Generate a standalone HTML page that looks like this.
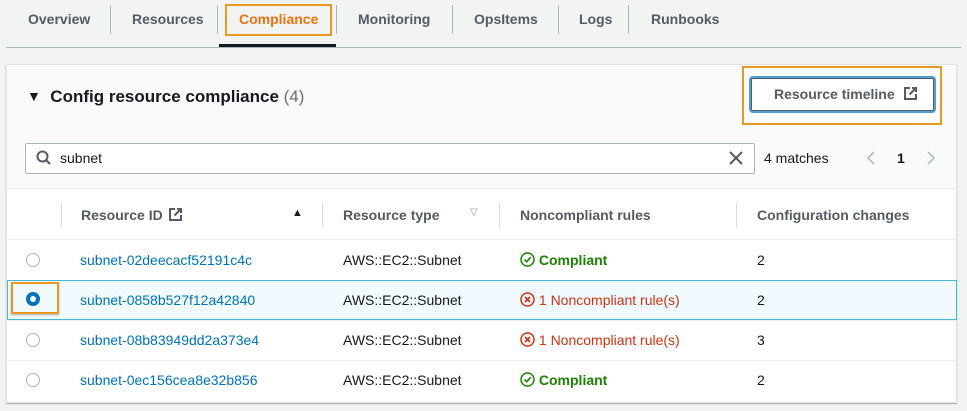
<!DOCTYPE html>
<html><head><style>
body{margin:0;width:967px;height:411px;background:#f2f3f3;font-family:"Liberation Sans",sans-serif;position:relative;overflow:hidden;color:#16191f}
.a{position:absolute}
.tab{position:absolute;top:11px;font-size:14px;font-weight:bold;color:#545b64}
.sep{position:absolute;top:5px;width:1px;height:29px;background:#aab7b8}
.hd{position:absolute;top:207px;font-size:14px;font-weight:bold;color:#545b64}
.hs{position:absolute;top:203px;width:1px;height:24px;background:#d5dbdb}
.link{position:absolute;left:80px;font-size:14px;color:#0073bb}
.typ{position:absolute;left:343px;font-size:14px}
.num{position:absolute;left:757px;font-size:14px}
.radio{position:absolute;left:26px;width:12px;height:12px;border:1px solid #aab7b8;border-radius:50%;background:#fff}
.ok{position:absolute;left:520px;font-size:14px;color:#1d8102;font-weight:bold}
.bad{position:absolute;left:520px;font-size:14px;color:#d13212}
</style></head><body>
<span class="tab" style="left:28px">Overview</span>
<div class="sep" style="left:110px"></div>
<span class="tab" style="left:132px">Resources</span>
<div class="sep" style="left:217px"></div>
<span class="tab" style="left:239px;color:#ec7211">Compliance</span>
<div class="a" style="left:225px;top:4px;width:103px;height:28px;border:2px solid #e8991f"></div>
<div class="sep" style="left:336px"></div>
<span class="tab" style="left:358px">Monitoring</span>
<div class="sep" style="left:452px"></div>
<span class="tab" style="left:474px">OpsItems</span>
<div class="sep" style="left:558px"></div>
<span class="tab" style="left:579px">Logs</span>
<div class="sep" style="left:628px"></div>
<span class="tab" style="left:651px">Runbooks</span>
<div class="a" style="left:6px;top:47px;width:955px;height:1px;background:#aab7b8"></div>
<div class="a" style="left:219px;top:44px;width:117px;height:3px;background:#16191f"></div>

<div class="a" style="left:6px;top:64px;width:949px;height:337px;background:#fafafa;border:1px solid #e1e4e4;box-shadow:0 1px 1px rgba(0,0,0,.3)"></div>
<div class="a" style="left:27px;top:87px;font-size:17px;font-weight:bold"><span style="font-size:14px;position:relative;top:-1px">&#9660;</span>&nbsp; Config resource compliance <span style="color:#687078;font-weight:normal">(4)</span></div>
<div class="a" style="left:742px;top:66px;width:200px;height:59px;border:2px solid #e8991f;box-sizing:border-box"></div>
<div class="a" style="left:751px;top:78px;width:183px;height:33px;border:1px solid #545b64;box-shadow:0 0 0 2px #4f9fd0;border-radius:2px;background:#fff;box-sizing:border-box;font-size:14px;font-weight:bold;color:#545b64;line-height:31px;padding-left:22px">Resource timeline <svg width="13" height="13" style="vertical-align:-1px;margin-left:5px"><path d="M6 1H1V12H12V7M8 1H12V5M12 1L5.5 7.5" fill="none" stroke="#545b64" stroke-width="2"/></svg></div>

<div class="a" style="left:25px;top:143px;width:728px;height:29px;border:1px solid #aab7b8;background:#fff;border-radius:2px"></div>
<svg class="a" style="left:36px;top:150px" width="16" height="16"><circle cx="6.5" cy="6.5" r="5" fill="none" stroke="#545b64" stroke-width="2"/><line x1="10" y1="10" x2="14" y2="14" stroke="#545b64" stroke-width="2"/></svg>
<span class="a" style="left:60px;top:150px;font-size:14px">subnet</span>
<svg class="a" style="left:729px;top:151px" width="14" height="14"><path d="M1 1L13 13M13 1L1 13" stroke="#545b64" stroke-width="2"/></svg>
<span class="a" style="left:764px;top:150px;font-size:14px">4 matches</span>
<svg class="a" style="left:866px;top:151px" width="10" height="14"><path d="M8 1L2 7L8 13" fill="none" stroke="#aab7b8" stroke-width="1.5"/></svg>
<span class="a" style="left:897px;top:150px;font-size:14px;font-weight:bold">1</span>
<svg class="a" style="left:926px;top:151px" width="10" height="14"><path d="M2 1L8 7L2 13" fill="none" stroke="#aab7b8" stroke-width="1.5"/></svg>
<div class="a" style="left:7px;top:188px;width:948px;height:1px;background:#eaeded"></div>

<div class="a" style="left:7px;top:189px;width:948px;height:212px;background:#fff"></div>
<div class="hs" style="left:61px"></div><div class="hs" style="left:322px"></div><div class="hs" style="left:499px"></div><div class="hs" style="left:736px"></div>
<span class="hd" style="left:81px">Resource ID <svg width="13" height="13" style="vertical-align:-1px;margin-left:2px"><path d="M6 1H1V12H12V7M8 1H12V5M12 1L5.5 7.5" fill="none" stroke="#545b64" stroke-width="2"/></svg></span>
<span class="a" style="left:292px;top:207px;font-size:11px">&#9650;</span>
<span class="hd" style="left:343px">Resource type</span>
<span class="a" style="left:470px;top:207px;font-size:10px;color:#879596">&#9661;</span>
<span class="hd" style="left:520px">Noncompliant rules</span>
<span class="hd" style="left:757px">Configuration changes</span>
<div class="a" style="left:7px;top:239px;width:948px;height:1px;background:#eaeded"></div>
<div class="a" style="left:7px;top:280px;width:948px;height:38px;background:#f1faff;border:1px solid #44b9d6"></div>
<div class="a" style="left:7px;top:320px;width:948px;height:1px;background:#eaeded"></div>
<div class="a" style="left:7px;top:360px;width:948px;height:1px;background:#eaeded"></div>

<div class="radio" style="top:253px"></div>
<div class="a" style="left:11px;top:282px;width:48px;height:32px;border:2px solid #e8991f;box-sizing:border-box;box-shadow:0 1px 2px rgba(0,0,0,.3)"></div>
<div class="a" style="left:26px;top:292px;width:14px;height:14px;border-radius:50%;background:#0073bb;box-sizing:border-box;border:4px solid #0073bb"><div style="width:6px;height:6px;border-radius:50%;background:#fff"></div></div>
<div class="radio" style="top:333px"></div>
<div class="radio" style="top:373px"></div>

<span class="link" style="top:252px">subnet-02deecacf52191c4c</span>
<span class="link" style="top:292px">subnet-0858b527f12a42840</span>
<span class="link" style="top:332px">subnet-08b83949dd2a373e4</span>
<span class="link" style="top:372px">subnet-0ec156cea8e32b856</span>
<span class="typ" style="top:252px">AWS::EC2::Subnet</span>
<span class="typ" style="top:292px">AWS::EC2::Subnet</span>
<span class="typ" style="top:332px">AWS::EC2::Subnet</span>
<span class="typ" style="top:372px">AWS::EC2::Subnet</span>
<span class="ok" style="top:252px"><svg width="15" height="15" style="vertical-align:-2px"><circle cx="7.5" cy="7.5" r="6.5" fill="none" stroke="#1d8102" stroke-width="1.5"/><path d="M4.5 7.5L6.7 9.8L10.7 5.2" fill="none" stroke="#1d8102" stroke-width="1.6"/></svg> Compliant</span>
<span class="bad" style="top:292px"><svg width="15" height="15" style="vertical-align:-2px"><circle cx="7.5" cy="7.5" r="6.5" fill="none" stroke="#d13212" stroke-width="1.5"/><path d="M5 5L10 10M10 5L5 10" stroke="#d13212" stroke-width="1.6"/></svg> 1 Noncompliant rule(s)</span>
<span class="bad" style="top:332px"><svg width="15" height="15" style="vertical-align:-2px"><circle cx="7.5" cy="7.5" r="6.5" fill="none" stroke="#d13212" stroke-width="1.5"/><path d="M5 5L10 10M10 5L5 10" stroke="#d13212" stroke-width="1.6"/></svg> 1 Noncompliant rule(s)</span>
<span class="ok" style="top:372px"><svg width="15" height="15" style="vertical-align:-2px"><circle cx="7.5" cy="7.5" r="6.5" fill="none" stroke="#1d8102" stroke-width="1.5"/><path d="M4.5 7.5L6.7 9.8L10.7 5.2" fill="none" stroke="#1d8102" stroke-width="1.6"/></svg> Compliant</span>
<span class="num" style="top:252px">2</span>
<span class="num" style="top:292px">2</span>
<span class="num" style="top:332px">3</span>
<span class="num" style="top:372px">2</span>
</body></html>
